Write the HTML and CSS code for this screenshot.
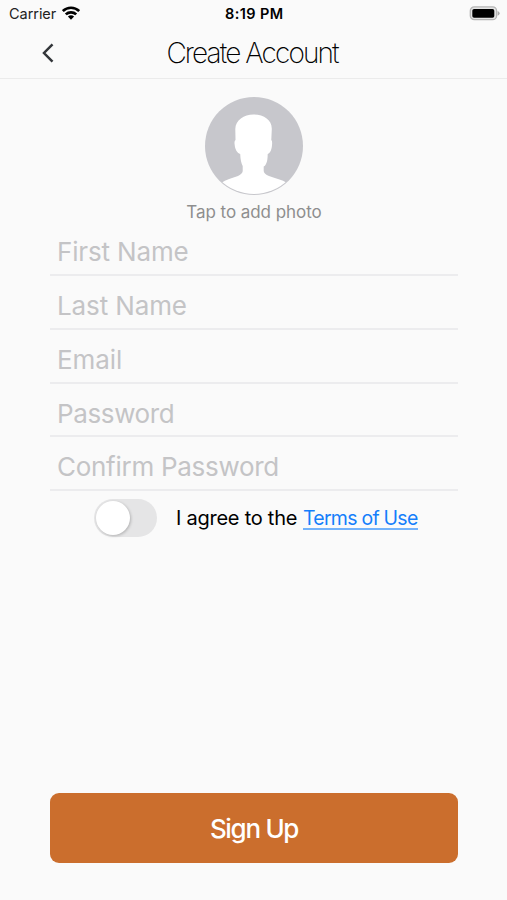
FILE: index.html
```html
<!DOCTYPE html>
<html lang="en">
<head>
<meta charset="utf-8">
<title>Create Account</title>
<link rel="stylesheet" href="styles.css">
</head>
<body>
<div class="screen">
  <div class="status">
    <div class="carrier"><span class="carrier-name">Carrier</span>
      <svg class="wifi" width="18" height="14" viewBox="0 0 18 14"><g fill="none" stroke="#000" stroke-width="2.7"><path d="M.8 5.1C5.4.6 12.6.6 17.2 5.1"/><path d="M3.8 8.4C6.7 5.6 11.3 5.6 14.2 8.4"/></g><path d="M5.900 10.600Q9 8 12.100 10.600L9 13.700Z"/></svg>
    </div>
    <span class="time">8:19 PM</span>
    <svg class="battery" width="31" height="15" viewBox="0 0 31 15"><rect x="1.3" y=".9" width="26.300" height="12.800" rx="4" fill="#e4e4e4" stroke="#b5b5b5" stroke-width="1.3"/><rect x="3.300" y="2.900" width="22" height="8.800" rx="1.800"/><path d="M28.600 4.900Q30.600 5.700 30.600 7.300T28.600 9.700Z" fill="#aaa"/></svg>
  </div>
  <header class="nav">
    <svg class="back" width="12" height="20" viewBox="0 0 12 20"><path d="M10.500 1.300L2 10L10.500 18.700" fill="none" stroke="#33363a" stroke-width="2.500"/></svg>
    <h1 class="title">Create Account</h1>
  </header>
  <main class="content">
    <svg class="avatar" width="98" height="98" viewBox="0 0 98 98">
      <defs><clipPath id="disc"><circle cx="49" cy="49" r="48"/></clipPath></defs>
      <circle cx="49" cy="49" r="49" fill="#c7c7cc"/>
      <path clip-path="url(#disc)" fill="#fff" d="M48.500 17.500C59 17.500 67 23 66.800 32L66.300 43Q67.500 44 67 48C66.800 52 65.500 56 62.700 57Q62.700 64 61 67Q60 69 58.700 69.500V74Q59 77 64 79C71 81.500 77 82.500 82 86V98H16V86C21 82.500 27 81 33 79Q37.800 76.500 37.700 74V69Q35.500 65 35.200 57C32 56 30 52 29.700 48Q29 44 30.500 43L30.300 32C30.500 23 39 17.500 48.500 17.500Z"/>
    </svg>
    <span class="hint">Tap to add photo</span>
    <form class="form">
      <div class="field first">First Name</div>
      <div class="field last">Last Name</div>
      <div class="field email">Email</div>
      <div class="field password">Password</div>
      <div class="field confirm">Confirm Password</div>
    </form>
    <div class="terms">
      <span class="toggle"><span class="knob"></span></span>
      <span class="agree">I agree to the</span>
      <a class="link">Terms of Use</a>
    </div>
    <div class="signup"><span>Sign Up</span></div>
  </main>
</div>
</body>
</html>
```

FILE: styles.css
```css
* { box-sizing: border-box; }
body { margin: 0; background: #fafafa; font-family: Inter, sans-serif; color: #000; }
.screen { width: 507px; height: 900px; display: flex; flex-direction: column; overflow: hidden; }
.status { height: 28px; padding: 0 7px 0 9px; display: grid; grid-template-columns: 1fr auto 1fr; align-items: center; flex: none; }
.carrier { display: flex; align-items: center; gap: 6px; font-size: 14.5px; line-height: 28px; color: #222; }
.carrier-name { width: 47px; white-space: nowrap; letter-spacing: -0.05px; }
.wifi { margin-top: -2px; }
.time { font-size: 14.5px; font-weight: 600; line-height: 28px; letter-spacing: 0.4px; margin-right: 0.5px; }
.battery { justify-self: end; margin-top: -2px; }
.nav { height: 51px; flex: none; border-bottom: 1px solid #ebebeb; display: grid; grid-template-columns: 54px 1fr 54px; align-items: center; }
.back { justify-self: end; }
.title { margin: 0; text-align: center; font-size: 28px; font-weight: 200; line-height: 50px; letter-spacing: -1.9px; text-indent: -3px; white-space: nowrap; }
.content { flex: 1; padding: 18px 49px 37px 50px; display: flex; flex-direction: column; align-items: center; }
.avatar { flex: none; }
.hint { margin-top: 6px; font-size: 17px; line-height: 22px; height: 21px; color: #8e8e8e; letter-spacing: -0.05px; }
.form { width: 100%; margin-top: 0; }
.field { height: 53.75px; padding: 13px 7px 0; border-bottom: 2px solid #ececee; font-size: 26px; line-height: 34px; color: #c4c4c6; white-space: nowrap; }
.field.first { height: 54px; letter-spacing: -0.16px; }
.field.last { letter-spacing: -0.12px; }
.field.email { letter-spacing: -0.06px; }
.field.password { letter-spacing: -0.37px; }
.field.confirm { letter-spacing: -0.28px; }
.terms { width: 100%; height: 54px; padding-left: 44px; display: flex; align-items: center; font-size: 20px; white-space: nowrap; }
.toggle { width: 63px; height: 38px; border-radius: 19px; background: #e5e5e6; padding: 2px; flex: none; }
.knob { display: block; width: 34px; height: 34px; border-radius: 50%; background: #fff; box-shadow: 1px 1px 3px rgba(0,0,0,.22); }
.agree { margin-left: 19px; width: 127px; letter-spacing: -0.25px; }
.link { color: #147efb; border-bottom: 2px solid #72b2fb; font-size: 19.5px; line-height: 19px; margin-top: 3px; letter-spacing: -0.75px; }
.signup { width: 100%; height: 70px; margin-top: auto; border-radius: 9px; background: #cb6e2d; color: #fff; display: flex; align-items: center; justify-content: center; font-size: 26px; font-weight: 500; letter-spacing: -1.3px; padding-top: 1px; }
```
